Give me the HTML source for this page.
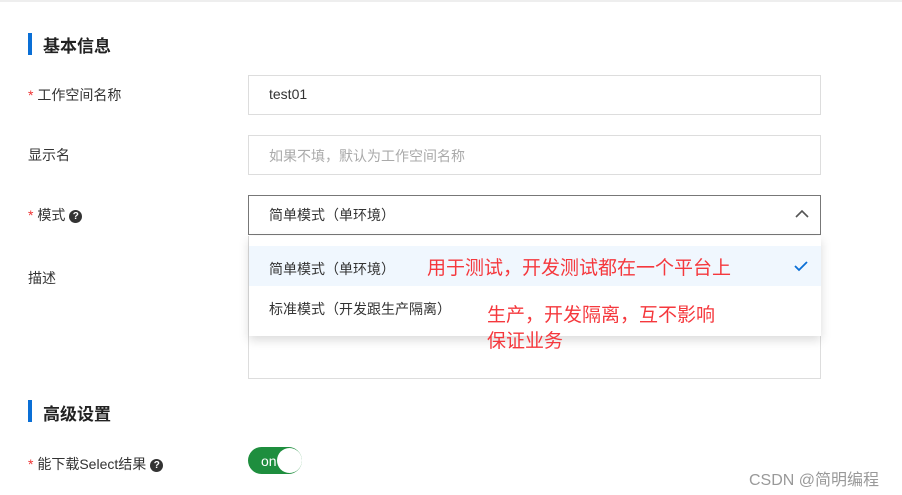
<!DOCTYPE html><html><head><style>
body{margin:0;width:902px;height:495px;background:#fff;position:relative;overflow:hidden;font-family:"Liberation Sans","Noto Sans CJK SC",sans-serif;color:#333;font-size:14px}
.a{position:absolute;white-space:nowrap}
.h{font-size:17px;font-weight:bold;color:#222}
.bar{position:absolute;width:4px;height:22px;background:#0a6fd6}
.s{color:#e33}
.box{position:absolute;left:248px;width:573px;border:1px solid #ddd;box-sizing:border-box}
.q{display:inline-block;width:13px;height:13px;border-radius:50%;background:#333;color:#fff;font-size:10px;text-align:center;line-height:13px;font-weight:bold;vertical-align:1px;margin-left:4px}
.r{color:#f5383d;font-size:19px}
</style></head><body>
<div class="a" style="left:0;top:0;width:902px;height:2px;background:#eee"></div>
<div class="bar" style="left:28px;top:33px"></div><div class="a h" style="left:43px;top:32px">基本信息</div>
<div class="a" style="left:28px;top:85px"><span class="s">*</span> 工作空间名称</div>
<div class="box" style="top:75px;height:40px"></div><div class="a" style="left:269px;top:86px">test01</div>
<div class="a" style="left:28px;top:145px">显示名</div>
<div class="box" style="top:135px;height:40px"></div><div class="a" style="left:269px;top:146px;color:#aaa">如果不填，默认为工作空间名称</div>
<div class="a" style="left:28px;top:205px"><span class="s">*</span> 模式<span class="q">?</span></div>
<div class="box" style="top:195px;height:40px;border-color:#777"></div><div class="a" style="left:269px;top:205px">简单模式（单环境）</div>
<svg class="a" style="left:794px;top:208px" width="16" height="12"><path d="M2 9L8 3L14 9" fill="none" stroke="#555" stroke-width="1.6"/></svg>
<div class="a" style="left:28px;top:268px">描述</div>
<div class="box" style="top:236px;height:143px"></div>
<div class="a" style="left:249px;top:236px;width:572px;height:100px;background:#fff;box-shadow:0 4px 10px rgba(0,0,0,.15)"></div>
<div class="a" style="left:249px;top:246px;width:572px;height:40px;background:#f0f7fe"></div>
<div class="a" style="left:269px;top:259px">简单模式（单环境）</div>
<svg class="a" style="left:793px;top:259px" width="16" height="14"><path d="M2 7L6 11L14 3" fill="none" stroke="#0a6fd6" stroke-width="1.8"/></svg>
<div class="a" style="left:269px;top:299px">标准模式（开发跟生产隔离）</div>
<div class="a r" style="left:427px;top:253px">用于测试，开发测试都在一个平台上</div>
<div class="a r" style="left:487px;top:300px">生产，开发隔离，互不影响</div>
<div class="a r" style="left:487px;top:326px">保证业务</div>
<div class="bar" style="left:28px;top:400px"></div><div class="a h" style="left:43px;top:400px">高级设置</div>
<div class="a" style="left:28px;top:454px"><span class="s">*</span> 能下载Select结果<span class="q">?</span></div>
<div class="a" style="left:248px;top:447px;width:54px;height:27px;border-radius:14px;background:#1e8e3e"></div>
<div class="a" style="left:261px;top:453px;color:#fff;font-size:14px">on</div>
<div class="a" style="left:277px;top:448px;width:25px;height:25px;border-radius:50%;background:#fff"></div>
<div class="a" style="left:749px;top:466px;color:#999;font-size:16px">CSDN @简明编程</div>
</body></html>
